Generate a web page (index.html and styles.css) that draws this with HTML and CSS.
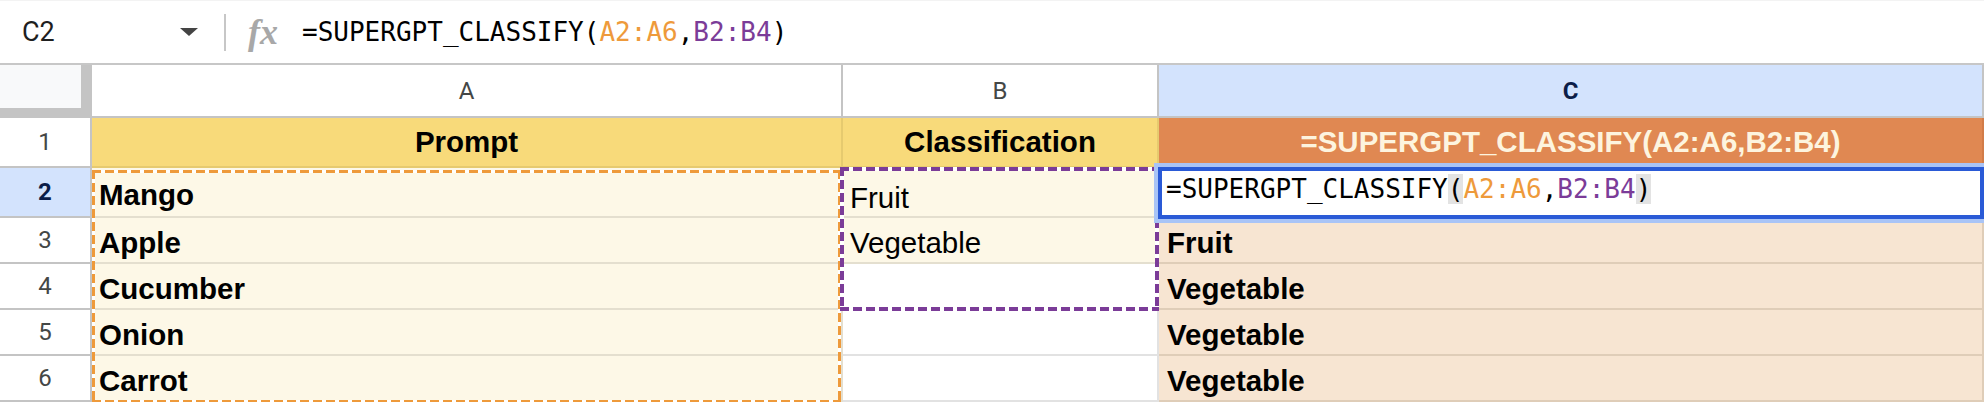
FILE: index.html
```html
<!DOCTYPE html>
<html lang="en">
<head>
  <meta charset="UTF-8">
  <title>SUPERGPT_CLASSIFY</title>
  <link rel="stylesheet" href="styles.css">
</head>
<body>

  <div class="formula-bar">
    <div class="name-box">
      <span class="cell-ref">C2</span>
      <span class="caret"></span>
    </div>
    <div class="divider"></div>
    <span class="fx">fx</span>
    <div class="formula">=SUPERGPT_CLASSIFY(<span class="ref-a">A2:A6</span>,<span class="ref-b">B2:B4</span>)</div>
  </div>

  <div class="sheet">
    <!-- column headers -->
    <div class="cell corner"></div>
    <div class="cell col-head">A</div>
    <div class="cell col-head">B</div>
    <div class="cell col-head active">C</div>

    <!-- row 1 -->
    <div class="cell row-head">1</div>
    <div class="cell title">Prompt</div>
    <div class="cell title">Classification</div>
    <div class="cell title output">=SUPERGPT_CLASSIFY(A2:A6,B2:B4)</div>

    <!-- row 2 -->
    <div class="cell row-head active">2</div>
    <div class="cell prompt">Mango</div>
    <div class="cell label low">Fruit</div>
    <div class="cell blank"></div>

    <!-- row 3 -->
    <div class="cell row-head">3</div>
    <div class="cell prompt">Apple</div>
    <div class="cell label">Vegetable</div>
    <div class="cell result">Fruit</div>

    <!-- row 4 -->
    <div class="cell row-head">4</div>
    <div class="cell prompt">Cucumber</div>
    <div class="cell blank"></div>
    <div class="cell result">Vegetable</div>

    <!-- row 5 -->
    <div class="cell row-head">5</div>
    <div class="cell prompt">Onion</div>
    <div class="cell blank"></div>
    <div class="cell result">Vegetable</div>

    <!-- row 6 -->
    <div class="cell row-head">6</div>
    <div class="cell prompt">Carrot</div>
    <div class="cell blank"></div>
    <div class="cell result">Vegetable</div>

    <!-- range highlights + in-cell editor -->
    <div class="range range-a"></div>
    <div class="range range-b"></div>
    <div class="editor">=SUPERGPT_CLASSIFY<span class="paren">(</span><span class="ref-a">A2:A6</span>,<span class="ref-b">B2:B4</span><span class="paren">)</span></div>
  </div>

</body>
</html>
```

FILE: styles.css
```css
body {
  margin: 0;
  background: #fff;
  font-family: "Liberation Sans", Arial, sans-serif;
  color: #000;
  overflow: hidden;
}

/* formula bar */
.formula-bar {
  display: flex;
  align-items: center;
  height: 65px;
  box-sizing: border-box;
  border-top: 1px solid #f3f3f3;
  border-bottom: 2px solid #c7c7c7;
}

.name-box {
  width: 206px;
  box-sizing: border-box;
  padding: 0 8px 0 22px;
  display: flex;
  align-items: center;
  justify-content: space-between;
}

.cell-ref {
  font-family: Roboto, sans-serif;
  font-size: 27px;
  color: #1f1f1f;
}

.caret {
  border-left: 9px solid transparent;
  border-right: 9px solid transparent;
  border-top: 8px solid #444;
}

.divider {
  width: 2px;
  height: 37px;
  margin-left: 18px;
  background: #c7c7c7;
}

.fx {
  margin-left: 22px;
  width: 31px;
  font-family: "Liberation Serif", serif;
  font-style: italic;
  font-weight: bold;
  font-size: 36px;
  line-height: 36px;
  color: #a8a8a8;
}

.formula {
  margin-left: 23px;
  font-family: "DejaVu Sans Mono", monospace;
  font-size: 26px;
  color: #000;
}

.ref-a { color: #ee9a3b; }
.ref-b { color: #7b3c98; }

/* grid */
.sheet {
  position: relative;
  display: grid;
  grid-template-columns: 92px 751px 316px 1fr;
  grid-template-rows: 53px 50px 50px repeat(4, 46px);
}

.cell {
  box-sizing: border-box;
  display: flex;
  align-items: center;
  padding: 5px 7px 0;
  border-right: 2px solid #e2e2e2;
  border-bottom: 2px solid #e2e2e2;
  font-size: 29.5px;
  white-space: nowrap;
  overflow: hidden;
}

.corner {
  padding: 0;
  background: #f8f9fa;
  border-right: 11px solid #c4c4c4;
  border-bottom: 10px solid #c4c4c4;
}

.col-head,
.row-head {
  padding: 0;
  justify-content: center;
  background: #fff;
  border-color: #c4c4c4;
  font-family: Roboto, sans-serif;
  color: #444746;
}

.col-head { font-size: 24px; }
.row-head { font-size: 24px; }

.col-head.active,
.row-head.active {
  background: #d3e3fd;
  color: #0b1d48;
  font-weight: bold;
}

.title {
  padding-top: 0;
  justify-content: center;
  background: #f8da7a;
  border-color: #e6ca6f;
  font-weight: bold;
}

.title.output {
  background: #e08852;
  border-color: #d27c48;
  color: #fdf4df;
}

.prompt {
  background: #fdf8e7;
  border-color: #e4dfcf;
  font-weight: bold;
}

.label {
  background: #fdf8e7;
  border-color: #e4dfcf;
}

.label.low { padding-top: 12px; }

.result {
  background: #f7e5d2;
  border-color: #dfcdb8;
  font-weight: bold;
  padding-left: 8px;
}

/* dashed reference ranges */
.range {
  position: absolute;
  pointer-events: none;
  background:
    repeating-linear-gradient(90deg, var(--c) 0 9px, #fff 9px 13px) top left / 100% var(--w) no-repeat,
    repeating-linear-gradient(90deg, var(--c) 0 9px, #fff 9px 13px) bottom left / 100% var(--w) no-repeat,
    repeating-linear-gradient(180deg, var(--c) 0 9px, #fff 9px 13px) top left / var(--w) 100% no-repeat,
    repeating-linear-gradient(180deg, var(--c) 0 9px, #fff 9px 13px) top right / var(--w) 100% no-repeat;
}

.range-a {
  --c: #ee9a3b;
  --w: 3px;
  left: 92px;
  top: 105px;
  width: 749px;
  height: 233px;
}

.range-b {
  --c: #7b3c98;
  --w: 4px;
  left: 840px;
  top: 102px;
  width: 319px;
  height: 144px;
}

/* cell being edited */
.editor {
  position: absolute;
  left: 1158px;
  top: 102px;
  right: 0;
  height: 52px;
  box-sizing: border-box;
  padding: 3px 0 0 4px;
  background: #fff;
  border: 4px solid #2a5ad6;
  box-shadow: 0 0 0 4px #a9c4f6;
  font-family: "DejaVu Sans Mono", monospace;
  font-size: 26px;
  line-height: 30px;
  white-space: nowrap;
}

.paren { background: #e3e3e3; }
```
